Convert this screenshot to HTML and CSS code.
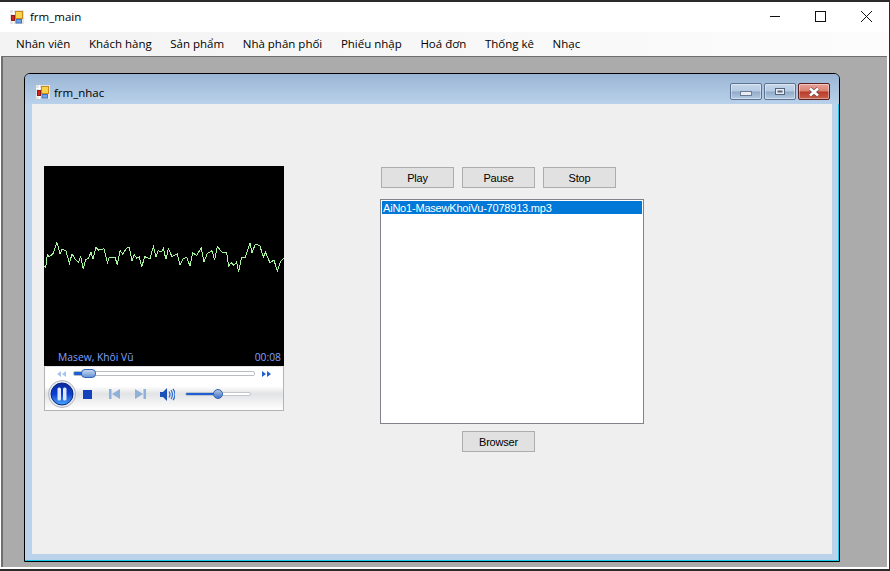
FILE: index.html
```html
<!DOCTYPE html>
<html lang="en">
<head>
    <meta charset="UTF-8">
    <title>frm_main</title>
    <link rel="stylesheet" href="styles.css">
</head>
<body>
    <svg class="defs" width="0" height="0">
        <defs>
            <symbol id="formIcon" viewBox="0 0 14 14">
                <rect x="0" y="0" width="14" height="14" fill="#e4e4e4"/>
                <path d="M0 3.500h5M3.500 0v14M0 11h6" stroke="#fff" fill="none"/>
                <rect x="5.500" y="1.500" width="7" height="7" fill="#f8d24a" stroke="#c98a1a"/>
                <rect x="1.500" y="5.500" width="3" height="5" fill="#d8231c" stroke="#8c1a14"/>
                <rect x="6" y="9.500" width="5.500" height="3.500" fill="#6fa4ea" stroke="#4273bd"/>
            </symbol>
            <linearGradient id="orbFill" x1="0" y1="0" x2="0" y2="1">
                <stop offset="0" stop-color="#0a2a9c"/>
                <stop offset="0.5" stop-color="#0c3fd0"/>
                <stop offset="1" stop-color="#49a8fa"/>
            </linearGradient>
        </defs>
    </svg>

    <div class="main">
        <div class="caption">
            <svg class="form-icon"><use href="#formIcon"/></svg>
            <span class="caption-text">frm_main</span>
            <div class="caption-btns">
                <svg width="46" height="30" viewBox="0 0 46 30"><path d="M19 14.500h10" stroke="#111" fill="none"/></svg>
                <svg width="46" height="30" viewBox="0 0 46 30"><rect x="18.500" y="9.500" width="10" height="10" stroke="#111" fill="none"/></svg>
                <svg width="46" height="30" viewBox="0 0 46 30"><path d="M18 9l11 11M29 9l-11 11" stroke="#111" fill="none"/></svg>
            </div>
        </div>

        <div class="menu">
            <span>Nhân viên</span>
            <span>Khách hàng</span>
            <span>Sản phẩm</span>
            <span>Nhà phân phối</span>
            <span>Phiếu nhập</span>
            <span>Hoá đơn</span>
            <span>Thống kê</span>
            <span>Nhạc</span>
        </div>

        <div class="mdi">
            <div class="child">
                <div class="child-title">
                    <svg class="child-icon"><use href="#formIcon"/></svg>
                    <span class="child-text">frm_nhac</span>
                    <div class="child-btns">
                        <div class="cbtn"><span class="glyph-min"></span></div>
                        <div class="cbtn"><span class="glyph-max"></span></div>
                        <div class="cbtn cbtn-close">
                            <svg width="14" height="10" viewBox="0 0 14 10">
                                <path d="M3 1.500l8 7M11 1.500l-8 7" stroke="#6a4a46" stroke-width="4" fill="none"/>
                                <path d="M3 1.500l8 7M11 1.500l-8 7" stroke="#fff" stroke-width="2.600" fill="none"/>
                            </svg>
                        </div>
                    </div>
                </div>

                <div class="child-body">
                    <div class="player">
                        <div class="video">
                            <svg class="wave" width="240" height="50" viewBox="12 0 720 150">
                                <polyline fill="none" stroke="#a8f5a0" stroke-width="3" points="12,108 17,112 22,75 28,80 40,70 50,38 55,50 60,72 66,58 78,62 88,100 96,72 106,88 115,97 122,80 130,118 137,88 145,86 153,66 159,88 168,52 176,60 192,56 202,98 207,84 225,82 232,104 240,62 248,72 262,52 268,52 276,92 282,74 290,84 298,80 305,112 314,80 330,86 340,50 348,80 354,62 365,66 370,56 378,88 385,56 396,80 412,72 420,105 428,88 440,82 450,108 458,68 470,76 484,54 492,96 502,70 516,62 524,90 532,50 546,66 560,68 566,108 574,98 582,106 590,96 596,126 604,84 616,82 630,38 636,68 646,42 660,48 670,82 676,66 690,98 702,90 712,124 722,94 732,84"/>
                            </svg>
                            <div class="video-info">
                                <span>Masew, Khôi Vũ</span>
                                <span>00:08</span>
                            </div>
                        </div>
                        <div class="controls">
                            <div class="seek-row">
                                <svg width="9" height="6" viewBox="0 0 9 6"><path d="M4 0v6L0 3zM9 0v6L5 3z" fill="#a9c4ea"/></svg>
                                <div class="seek">
                                    <div class="seek-thumb"></div>
                                </div>
                                <svg width="9" height="6" viewBox="0 0 9 6"><path d="M0 0v6l4-3zM5 0v6l4-3z" fill="#1f5fd0"/></svg>
                            </div>
                            <div class="btn-row">
                                <svg class="orb" width="28" height="28" viewBox="0 0 28 28">
                                    <circle cx="14" cy="14" r="13.500" fill="#e6e9ef" stroke="#b4b8c2"/>
                                    <circle cx="14" cy="14" r="11" fill="url(#orbFill)" stroke="#0a2480"/>
                                    <rect x="9.500" y="7.500" width="3.500" height="13" rx="1.500" fill="#dfe8fb"/>
                                    <rect x="15" y="7.500" width="3.500" height="13" rx="1.500" fill="#dfe8fb"/>
                                </svg>
                                <span class="stop-btn"></span>
                                <svg class="prev-btn" width="11" height="10" viewBox="0 0 11 10"><path d="M0 0h2.500v10H0zM11 0v10L3 5z" fill="#8fb0da"/></svg>
                                <svg class="next-btn" width="11" height="10" viewBox="0 0 11 10"><path d="M11 0H8.500v10H11zM0 0v10l8-5z" fill="#8fb0da"/></svg>
                                <svg class="vol-btn" width="15" height="13" viewBox="0 0 15 13">
                                    <path d="M0 4h3l4-4v13L3 9H0z" fill="#1c52b8"/>
                                    <path d="M9 3.500q2 3 0 6M11 2q3 4.500 0 9M13 .8q4 5.700 0 11.400" fill="none" stroke="#2f6ad0" stroke-width="1.200"/>
                                </svg>
                                <div class="vol">
                                    <div class="vol-thumb"></div>
                                </div>
                            </div>
                        </div>
                    </div>

                    <div class="side">
                        <div class="btns">
                            <button type="button">Play</button>
                            <button type="button">Pause</button>
                            <button type="button">Stop</button>
                        </div>
                        <div class="listbox">
                            <div class="list-item">AiNo1-MasewKhoiVu-7078913.mp3</div>
                        </div>
                        <button type="button" class="browse">Browser</button>
                    </div>
                </div>
            </div>
        </div>
    </div>
</body>
</html>
```

FILE: styles.css
```css
/* Basic styling */
body {
    margin: 0;
    width: 890px;
    height: 571px;
    overflow: hidden;
    background-color: #2b2b2b;
    font-family: "Open Sans", "Noto Sans", Arial, sans-serif;
    font-size: 11.500px;
    color: #000;
}

.defs {
    display: block;
    height: 0;
}

.main {
    margin-top: 2px;
    width: 889px;
    height: 567px;
    background: #fff;
    display: flex;
    flex-direction: column;
}

/* outer caption */
.caption {
    height: 30px;
    display: flex;
    align-items: center;
    padding-left: 10px;
}

.form-icon {
    width: 14px;
    height: 14px;
    margin-right: 6px;
}

.caption-text {
    margin-bottom: 2px;
}

.caption-btns {
    margin-left: auto;
    display: flex;
    height: 30px;
}

.caption-btns svg {
    display: block;
}

/* menu strip */
.menu {
    height: 22px;
    padding: 0 0 2px 7px;
    display: flex;
    align-items: center;
    background: linear-gradient(to right, #f3f3f3, #fcfcfc);
}

.menu span {
    padding: 0 9px;
    margin-right: 0.600px;
    white-space: nowrap;
}

/* mdi area */
.mdi {
    flex: 1;
    margin: 0 2px 2px 1px;
    border-top: 1px solid #6f6f6f;
    border-left: 2px solid #6f6f6f;
    background-color: #ababab;
    padding: 16px 0 0 21px;
}

.child {
    width: 800px;
    height: 480px;
    border: 1px solid #000;
    border-radius: 6px 6px 0 0;
    box-shadow: inset -1px -1px 0 #19c8e8;
    background: #bad2ea;
    display: flex;
    flex-direction: column;
    padding: 0 7px 7px 7px;
}

.child-title {
    height: 24px;
    margin: 0 -7px;
    padding: 6px 9px 0 11px;
    border-radius: 5px 5px 0 0;
    background: linear-gradient(to bottom, #9ab5d4, #b9d1ea);
    display: flex;
    align-items: center;
}

.child-icon {
    width: 14px;
    height: 14px;
    margin-right: 4px;
}

.child-btns {
    margin-left: auto;
    align-self: flex-start;
    margin-top: 3px;
    display: flex;
    gap: 2px;
}

.cbtn {
    width: 30px;
    height: 15px;
    border: 1px solid #5d7290;
    border-radius: 2px;
    background: linear-gradient(to bottom, #c6d8ea 0%, #b5cbe3 48%, #8fa9c8 52%, #b6cce4 100%);
    box-shadow: inset 0 0 0 1px rgba(255, 255, 255, 0.4);
    display: flex;
    align-items: center;
    justify-content: center;
}

.cbtn-close {
    border-color: #5a2020;
    background: linear-gradient(to bottom, #e8a196 0%, #d98374 48%, #b93a28 52%, #c8604c 100%);
}

.glyph-min {
    width: 10px;
    height: 3px;
    margin-top: 4px;
    background: #e9edf3;
    border: 1px solid #6a7a90;
}

.glyph-max {
    width: 8px;
    height: 5px;
    background: #55657c;
    border: 1px solid #55657c;
    box-shadow: inset 0 0 0 1.500px #e9edf3;
    margin-top: -1px;
}

.child-body {
    flex: 1;
    background-color: #efefef;
    display: flex;
    align-items: flex-start;
    padding: 62px 0 0 12px;
}

/* media player */
.player {
    width: 240px;
    flex-shrink: 0;
}

.video {
    height: 200px;
    background: #000;
    padding-top: 64px;
    box-sizing: border-box;
    display: flex;
    flex-direction: column;
}

.wave {
    display: block;
    shape-rendering: crispEdges;
}

.video-info {
    margin-top: auto;
    padding: 0 3px 1px 14px;
    display: flex;
    justify-content: space-between;
    font-size: 10.300px;
    line-height: 16px;
    color: #80a2ff;
}

.controls {
    height: 45px;
    box-sizing: border-box;
    border: 1px solid #b4b4b4;
    border-top: 1px solid #e4e4e4;
    background: linear-gradient(to bottom, #fff 0%, #fff 45%, #e2e3e5 62%, #f4f4f5 85%, #fff 100%);
}

.seek-row {
    height: 13px;
    padding: 0 12px;
    display: flex;
    align-items: center;
    gap: 7px;
}

.seek {
    flex: 1;
    height: 3px;
    position: relative;
    border: 1px solid #b9bcc2;
    border-radius: 2px;
    background: linear-gradient(to right, #1c5fd6 5%, #fff 5%);
}

.seek-thumb {
    position: absolute;
    left: 7px;
    top: -3px;
    width: 13px;
    height: 7px;
    border: 1px solid #2f62b8;
    border-radius: 4px;
    background: linear-gradient(to bottom, #c5d6ee, #6c95d6);
}

.btn-row {
    height: 28px;
    padding-left: 3px;
    display: flex;
    align-items: center;
}

.orb {
    flex-shrink: 0;
}

.stop-btn {
    width: 9px;
    height: 9px;
    margin-left: 7px;
    background: #1243bd;
}

.prev-btn {
    margin-left: 17px;
}

.next-btn {
    margin-left: 15px;
}

.vol-btn {
    margin-left: 14px;
}

.vol {
    width: 64px;
    height: 2px;
    margin-left: 10px;
    position: relative;
    border: 1px solid #c2c5ca;
    border-radius: 2px;
    background: linear-gradient(to right, #1c5fd6 48%, #fff 48%);
}

.vol-thumb {
    position: absolute;
    left: 27px;
    top: -4px;
    width: 8px;
    height: 8px;
    border: 1px solid #2f62b8;
    border-radius: 50%;
    background: linear-gradient(to bottom, #b8c4d8, #3f74cc);
}

/* right hand side */
.side {
    margin-left: 96px;
    width: 264px;
    display: flex;
    flex-direction: column;
}

.btns {
    margin: 1px 0 0 1px;
    display: flex;
    gap: 8px;
}

button {
    width: 73px;
    height: 21px;
    padding: 0;
    font-family: "Liberation Sans", Arial, sans-serif;
    font-size: 11px;
    letter-spacing: -0.200px;
    color: #000;
    background-color: #e1e1e1;
    border: 1px solid #adadad;
}

.listbox {
    height: 225px;
    margin-top: 11px;
    padding: 1px;
    box-sizing: border-box;
    background: #fff;
    border: 1px solid #82828c;
}

.list-item {
    height: 13px;
    line-height: 15px;
    padding-left: 1px;
    font-family: "Liberation Sans", Arial, sans-serif;
    font-size: 11px;
    letter-spacing: -0.200px;
    background-color: #0078d7;
    color: #fff;
    white-space: nowrap;
    overflow: hidden;
}

.browse {
    margin: 7px 0 0 82px;
}
```
